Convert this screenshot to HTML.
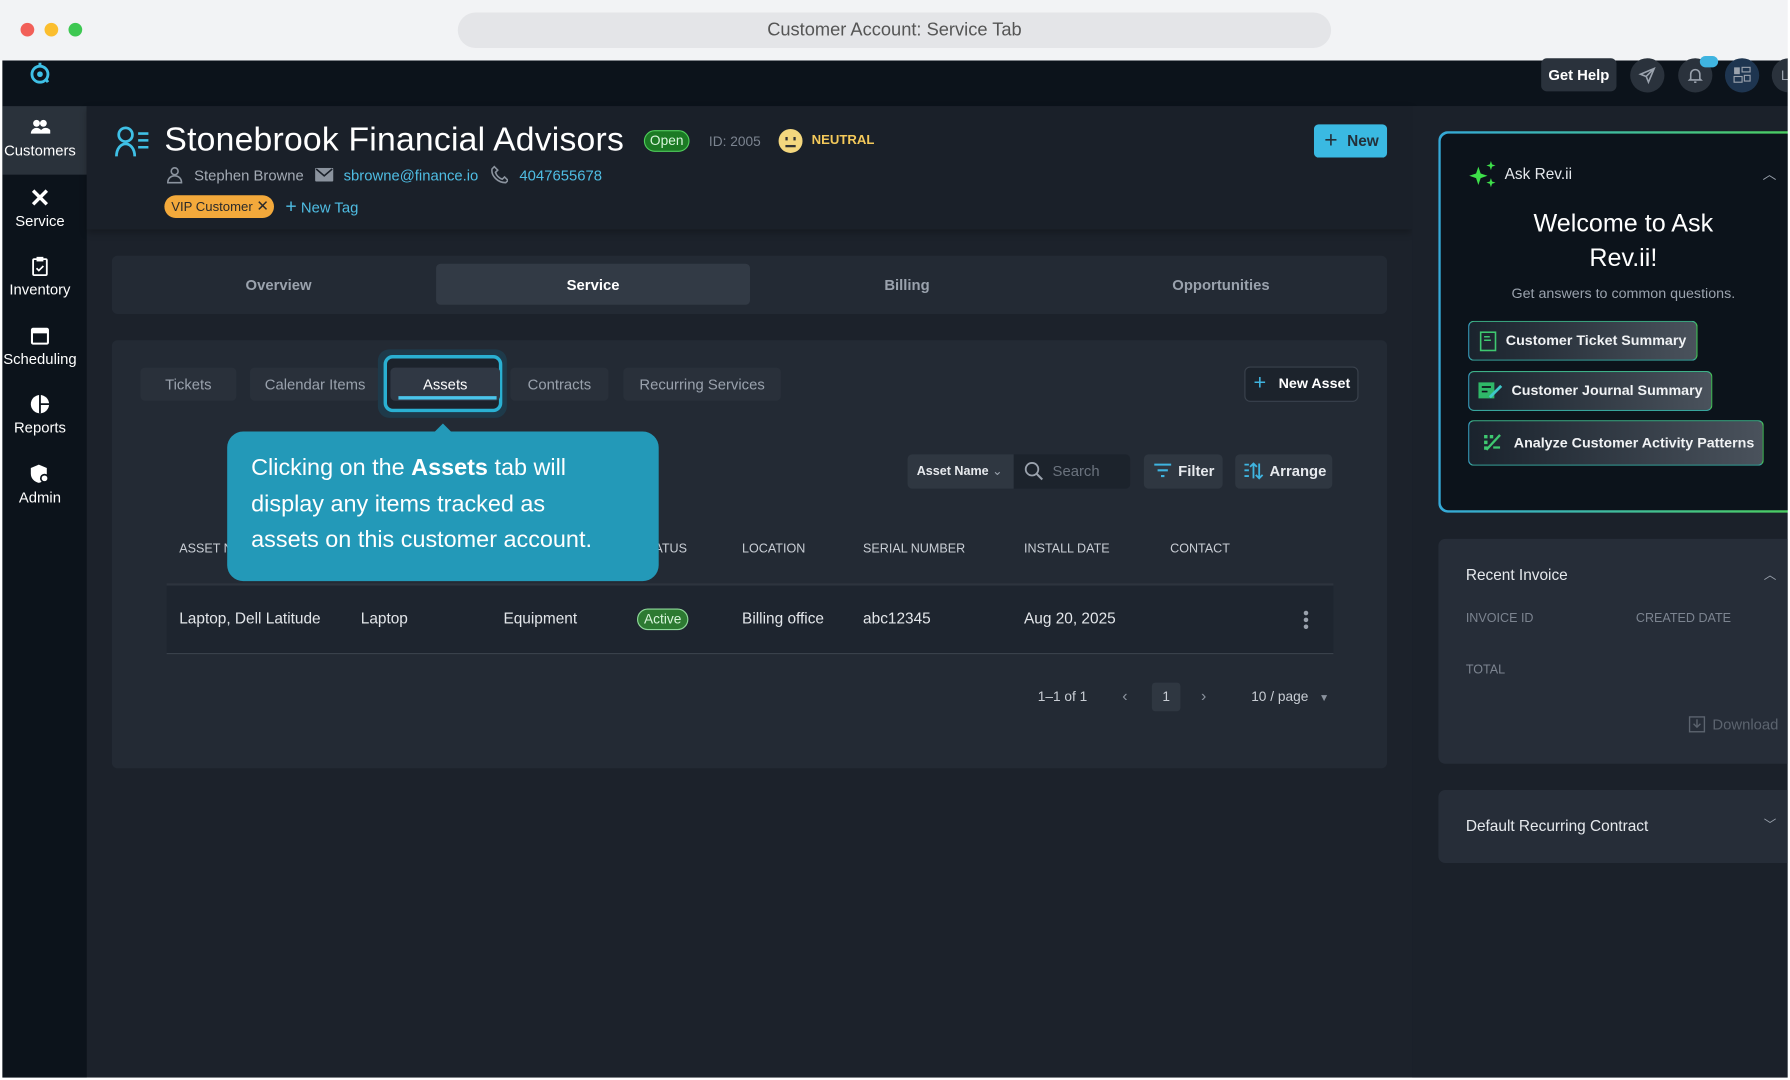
<!DOCTYPE html>
<html><head><meta charset="utf-8">
<style>
*{box-sizing:border-box;margin:0;padding:0}
html,body{width:1790px;height:1080px;overflow:hidden;background:#fff;font-family:"Liberation Sans",sans-serif}
#w{position:absolute;left:0;top:0;width:1568px;height:946px;transform:scale(1.1416);transform-origin:0 0;background:#fff}
.a{position:absolute}
.t{position:absolute;white-space:nowrap}
.side .it{position:absolute;left:-4px;width:74px;text-align:center;color:#fff;font-size:13px}
.side .it svg{display:block;margin:0 auto 4px}
.sub{position:absolute;top:322px;height:29px;background:#29303a;border-radius:4px;color:#9aa2ad;font-size:13px;text-align:center;line-height:29px}
.th{position:absolute;top:475px;color:#c9ced5;font-size:11px}
.td{position:absolute;top:534px;color:#e3e6ea;font-size:13.5px}
.btn{position:absolute;background:#2f3741;border-radius:4px;color:#e6e9ed;font-size:13px;font-weight:bold;line-height:30px;white-space:nowrap}
.ai{position:absolute;left:1286px;height:35px;border-radius:5px;border:1px solid #3aa3c4;background:linear-gradient(90deg,#1a232d,#4a525c);color:#f0f2f4;font-size:12.5px;font-weight:bold;line-height:33px;padding-left:32px;border-right-color:#44c45a;border-top-color:#3fb48a;border-bottom-color:#3aa8a0;white-space:nowrap}
</style></head><body><div id="w">
<div class="a" style="left:0;top:0;width:1568px;height:53px;background:#f2f3f5"></div>
<div class="a" style="left:18px;top:20px;width:12px;height:12px;border-radius:50%;background:#f25f58"></div>
<div class="a" style="left:39px;top:20px;width:12px;height:12px;border-radius:50%;background:#fbbe2e"></div>
<div class="a" style="left:60px;top:20px;width:12px;height:12px;border-radius:50%;background:#3ec852"></div>
<div class="a" style="left:401px;top:11px;width:765px;height:31px;border-radius:16px;background:#e4e5e8;color:#555;font-size:16px;text-align:center;line-height:31px">Customer Account: Service Tab</div>
<div class="a" style="left:2px;top:53px;width:1564px;height:891px;background:#1c222b"></div>
<div class="a" style="left:2px;top:53px;width:1564px;height:40px;background:#0c131b"></div>
<svg class="a" style="left:25px;top:54px" width="20" height="20" viewBox="0 0 20 20"><circle cx="10" cy="11" r="7" fill="none" stroke="#3fc0e6" stroke-width="2.5"/><circle cx="10" cy="11" r="2.5" fill="#3fc0e6"/><path d="M10 1v3M17 18l-2-3" stroke="#3fc0e6" stroke-width="2.5"/></svg>
<div class="a" style="left:1350px;top:51px;width:66px;height:29px;background:#2a323c;border-radius:5px;color:#fff;font-weight:bold;font-size:13px;text-align:center;line-height:29px">Get Help</div>
<div class="a" style="left:1428px;top:51px;width:30px;height:30px;border-radius:50%;background:#2a323c"></div>
<svg class="a" style="left:1435px;top:58px" width="16" height="16" viewBox="0 0 16 16"><path d="M14 2L2 7l5 2 2 5z M7 9l7-7" fill="none" stroke="#9aa2ad" stroke-width="1.4"/></svg>
<div class="a" style="left:1470px;top:51px;width:30px;height:30px;border-radius:50%;background:#2a323c"></div>
<svg class="a" style="left:1477px;top:58px" width="16" height="16" viewBox="0 0 16 16"><path d="M4 11V7a4 4 0 018 0v4l1 1H3z M7 14h2" fill="none" stroke="#9aa2ad" stroke-width="1.4"/></svg>
<div class="a" style="left:1489px;top:49px;width:16px;height:10px;border-radius:6px;background:#3fb4e0"></div>
<div class="a" style="left:1511px;top:51px;width:30px;height:30px;border-radius:50%;background:#1e3550"></div>
<svg class="a" style="left:1518px;top:58px" width="16" height="16" viewBox="0 0 16 16"><rect x="1" y="1" width="5" height="6" fill="#9aa2ad"/><rect x="8" y="1" width="7" height="4" fill="none" stroke="#9aa2ad"/><rect x="1" y="9" width="7" height="5" fill="none" stroke="#9aa2ad"/><rect x="10" y="8" width="5" height="5" fill="none" stroke="#9aa2ad"/></svg>
<div class="a" style="left:1552px;top:51px;width:30px;height:30px;border-radius:50%;background:#2a323c;color:#9aa2ad;font-size:12px;line-height:30px;padding-left:8px">L</div>
<div class="a side" style="left:2px;top:93px;width:74px;height:851px;background:#0c131b">
 <div class="a" style="left:0;top:0;width:74px;height:60px;background:#2a323b"></div>
 <div class="it" style="top:11px"><svg width="18" height="16" viewBox="0 0 18 16"><circle cx="6" cy="4" r="3" fill="#fff"/><circle cx="12" cy="4" r="3" fill="#fff"/><path d="M1 13a5 5 0 0110 0zM9 13a5 5 0 0110 0z" fill="#fff"/></svg>Customers</div>
 <div class="it" style="top:71px"><svg width="18" height="18" viewBox="0 0 18 18"><path d="M3 3l12 12M15 3L3 15" stroke="#fff" stroke-width="3"/></svg>Service</div>
 <div class="it" style="top:131px"><svg width="16" height="18" viewBox="0 0 16 18"><rect x="2" y="3" width="12" height="14" rx="1" fill="none" stroke="#fff" stroke-width="1.6"/><rect x="5" y="1" width="6" height="4" fill="#fff"/><path d="M5 11l2 2 4-4" stroke="#fff" fill="none" stroke-width="1.5"/></svg>Inventory</div>
 <div class="it" style="top:192px"><svg width="18" height="18" viewBox="0 0 18 18"><rect x="2" y="3" width="14" height="13" rx="1" fill="none" stroke="#fff" stroke-width="1.8"/><rect x="2" y="3" width="14" height="4" fill="#fff"/></svg>Scheduling</div>
 <div class="it" style="top:252px"><svg width="18" height="18" viewBox="0 0 18 18"><circle cx="9" cy="9" r="8" fill="#fff"/><path d="M9 1v16M9 9h8" stroke="#0c131b" stroke-width="1.6"/></svg>Reports</div>
 <div class="it" style="top:313px"><svg width="18" height="18" viewBox="0 0 18 18"><path d="M8 1l7 3v5c0 4-3 7-7 8-4-1-7-4-7-8V4z" fill="#fff"/><circle cx="13" cy="13" r="4" fill="#0c131b"/><circle cx="13" cy="13" r="2.5" fill="#fff"/></svg>Admin</div>
</div>
<div class="a" style="left:76px;top:93px;width:1161px;height:108px;background:#1a2029;box-shadow:0 3px 6px rgba(0,0,0,.25)"></div>
<svg class="a" style="left:100px;top:110px" width="32" height="28" viewBox="0 0 32 28"><circle cx="10" cy="8" r="6" fill="none" stroke="#3fc0e6" stroke-width="2.4"/><path d="M2 27c0-7 4-11 8-11s8 4 8 11" fill="none" stroke="#3fc0e6" stroke-width="2.4"/><path d="M21 7h9M21 13h9M21 19h9" stroke="#3fc0e6" stroke-width="2.2"/></svg>
<div class="t" style="left:144px;top:106px;font-size:29.5px;color:#fff;letter-spacing:0.2px">Stonebrook Financial Advisors</div>
<div class="a" style="left:564px;top:114px;width:40px;height:19px;border-radius:10px;border:1.5px solid #4fce5a;background:#1b7a24;color:#d9f5dc;font-size:12px;text-align:center;line-height:16px">Open</div>
<div class="t" style="left:621px;top:117px;font-size:12px;color:#7c8490">ID: 2005</div>
<div class="a" style="left:682px;top:113px;width:21px;height:21px;border-radius:50%;background:#f4d77e"></div>
<div class="a" style="left:688px;top:120px;width:2px;height:3px;background:#333"></div><div class="a" style="left:695px;top:120px;width:2px;height:3px;background:#333"></div><div class="a" style="left:688px;top:127px;width:9px;height:1.5px;background:#333"></div>
<div class="t" style="left:711px;top:117px;font-size:11.5px;color:#f4c95a;font-weight:bold">NEUTRAL</div>
<div class="a" style="left:1151px;top:109px;width:64px;height:29px;border-radius:4px;background:#3ab9e2;color:#23303a;font-weight:bold;font-size:13.5px;line-height:29px;padding-left:29px">New</div>
<div class="t" style="left:1160px;top:112px;font-size:20px;color:#23303a">+</div>
<svg class="a" style="left:146px;top:146px" width="14" height="15" viewBox="0 0 14 15"><circle cx="7" cy="4" r="3" fill="none" stroke="#8b939e" stroke-width="1.4"/><path d="M1 14c0-4 3-6 6-6s6 2 6 6z" fill="none" stroke="#8b939e" stroke-width="1.4"/></svg>
<div class="t" style="left:170px;top:146px;font-size:13px;color:#a3aab4">Stephen Browne</div>
<svg class="a" style="left:276px;top:147px" width="16" height="12" viewBox="0 0 16 12"><rect width="16" height="12" rx="1" fill="#8b939e"/><path d="M1 1l7 6 7-6" fill="none" stroke="#1a2029" stroke-width="1.4"/></svg>
<div class="t" style="left:301px;top:146px;font-size:13px;color:#4fbde3">sbrowne@finance.io</div>
<svg class="a" style="left:430px;top:145px" width="15" height="16" viewBox="0 0 15 16"><path d="M3 1l3 3-2 2c1 3 3 5 6 6l2-2 3 3-2 2C6 15 0 9 1 3z" fill="none" stroke="#8b939e" stroke-width="1.4"/></svg>
<div class="t" style="left:455px;top:146px;font-size:13px;color:#4fbde3">4047655678</div>
<div class="a" style="left:144px;top:171px;width:96px;height:20px;border-radius:10px;background:#f3a93b;color:#2a2a2a;font-size:11.5px;line-height:20px;padding-left:6px;white-space:nowrap">VIP Customer <span style="font-size:13px">✕</span></div>
<div class="t" style="left:250px;top:171px;font-size:13px;color:#4fbde3"><span style="font-size:17px">+</span> New Tag</div>
<div class="a" style="left:98px;top:224px;width:1117px;height:51px;background:#232a34;border-radius:5px"></div>
<div class="a" style="left:382px;top:231px;width:275px;height:36px;background:#323a45;border-radius:4px"></div>
<div class="t" style="left:98px;top:242px;width:292px;text-align:center;font-size:13px;font-weight:bold;color:#9aa2ad">Overview</div>
<div class="t" style="left:382px;top:242px;width:275px;text-align:center;font-size:13px;font-weight:bold;color:#fff">Service</div>
<div class="t" style="left:657px;top:242px;width:275px;text-align:center;font-size:13px;font-weight:bold;color:#9aa2ad">Billing</div>
<div class="t" style="left:932px;top:242px;width:275px;text-align:center;font-size:13px;font-weight:bold;color:#9aa2ad">Opportunities</div>
<div class="a" style="left:98px;top:298px;width:1117px;height:375px;background:#232a34;border-radius:5px"></div>
<div class="sub" style="left:123px;width:84px">Tickets</div>
<div class="sub" style="left:219px;width:114px">Calendar Items</div>
<div class="a" style="left:331px;top:306px;width:113px;height:60px;border-radius:10px;background:#1e3a4a"></div>
<div class="a" style="left:336px;top:311px;width:104px;height:50px;border-radius:8px;border:3px solid #2ab0d2;background:#1c232c"></div>
<div class="sub" style="left:342px;width:96px;background:#303844;color:#fff">Assets</div>
<div class="a" style="left:349px;top:347px;width:86px;height:3px;background:#4ac4ea"></div>
<div class="sub" style="left:447px;width:86px">Contracts</div>
<div class="sub" style="left:546px;width:138px">Recurring Services</div>
<div class="a" style="left:1090px;top:321px;width:100px;height:31px;border:1px solid #3a424d;border-radius:5px;background:#1c232c;color:#fff;font-size:12.5px;font-weight:bold;line-height:29px;padding-left:29px;white-space:nowrap">New Asset</div>
<div class="t" style="left:1098px;top:325px;font-size:19px;color:#3fb4e0">+</div>
<div class="btn" style="left:795px;top:398px;width:93px;padding-left:8px;font-size:11px;border-radius:4px 0 0 4px">Asset Name <span style="color:#9aa2ad;font-weight:normal">⌄</span></div>
<div class="a" style="left:888px;top:398px;width:102px;height:30px;background:#1c232c;border-radius:0 4px 4px 0;color:#6b737e;font-size:13px;line-height:30px;padding-left:34px">Search</div>
<svg class="a" style="left:897px;top:404px" width="17" height="17" viewBox="0 0 17 17"><circle cx="7" cy="7" r="5.5" fill="none" stroke="#9aa2ad" stroke-width="1.6"/><path d="M11 11l5 5" stroke="#9aa2ad" stroke-width="1.8"/></svg>
<div class="btn" style="left:1002px;top:398px;width:69px;padding-left:30px">Filter</div>
<svg class="a" style="left:1011px;top:406px" width="15" height="13" viewBox="0 0 15 13"><path d="M0 1h15M3 6h9M6 11h3" stroke="#3fb4e0" stroke-width="1.8"/></svg>
<div class="btn" style="left:1082px;top:398px;width:85px;padding-left:30px">Arrange</div>
<svg class="a" style="left:1090px;top:405px" width="17" height="15" viewBox="0 0 17 15"><path d="M0 2h4M0 7h4M0 12h4M8 14V1M5 4l3-3 3 3M13 1v13M10 11l3 3 3-3" fill="none" stroke="#3fb4e0" stroke-width="1.6"/></svg>
<div class="th" style="left:157px">ASSET NAME</div>
<div class="th" style="left:560px">STATUS</div>
<div class="th" style="left:650px">LOCATION</div>
<div class="th" style="left:756px">SERIAL NUMBER</div>
<div class="th" style="left:897px">INSTALL DATE</div>
<div class="th" style="left:1025px">CONTACT</div>
<div class="a" style="left:146px;top:511px;width:1022px;height:2px;background:#2d343e"></div>
<div class="a" style="left:146px;top:513px;width:1022px;height:59px;background:#1e252f"></div>
<div class="a" style="left:146px;top:572px;width:1022px;height:1px;background:#39414b"></div>
<div class="td" style="left:157px">Laptop, Dell Latitude</div>
<div class="td" style="left:316px">Laptop</div>
<div class="td" style="left:441px">Equipment</div>
<div class="a" style="left:558px;top:533px;width:45px;height:19px;border-radius:10px;border:1.5px solid #8fd99a;background:#2d7a32;color:#d9f5dc;font-size:12px;text-align:center;line-height:16px">Active</div>
<div class="td" style="left:650px">Billing office</div>
<div class="td" style="left:756px">abc12345</div>
<div class="td" style="left:897px">Aug 20, 2025</div>
<div class="a" style="left:1142px;top:535px;width:4px;height:4px;border-radius:50%;background:#9aa2ad"></div>
<div class="a" style="left:1142px;top:541px;width:4px;height:4px;border-radius:50%;background:#9aa2ad"></div>
<div class="a" style="left:1142px;top:547px;width:4px;height:4px;border-radius:50%;background:#9aa2ad"></div>
<div class="t" style="left:909px;top:603px;font-size:12px;color:#c9ced5">1–1 of 1</div>
<div class="t" style="left:983px;top:601px;font-size:14px;color:#8b939e">‹</div>
<div class="a" style="left:1009px;top:598px;width:25px;height:25px;border-radius:3px;background:#2f3741;color:#c9ced5;font-size:12px;text-align:center;line-height:25px">1</div>
<div class="t" style="left:1052px;top:601px;font-size:14px;color:#8b939e">›</div>
<div class="t" style="left:1096px;top:603px;font-size:12px;color:#c9ced5">10 / page <span style="color:#8b939e;font-size:9px;margin-left:6px">▼</span></div>
<div class="a" style="left:380px;top:371px;width:0;height:0;border-left:8px solid transparent;border-right:8px solid transparent;border-bottom:8px solid #2399b8"></div>
<div class="a" style="left:199px;top:378px;width:378px;height:131px;border-radius:14px;background:#2399b8;color:#fff;font-size:20.5px;line-height:31.5px;padding:16px 0 0 21px;white-space:nowrap">Clicking on the <b>Assets</b> tab will<br>display any items tracked as<br>assets on this customer account.</div>
<div class="a" style="left:1237px;top:93px;width:329px;height:851px;background:#1b212a"></div>
<div class="a" style="left:1260px;top:115px;width:320px;height:334px;border-radius:8px;background:linear-gradient(90deg,#35a9d8,#4ccf5c)"></div>
<div class="a" style="left:1262px;top:117px;width:318px;height:330px;border-radius:7px;background:#0c131b"></div>
<svg class="a" style="left:1286px;top:141px" width="26" height="24" viewBox="0 0 26 24"><path d="M9 5l2 6 6 2-6 2-2 6-2-6-6-2 6-2z" fill="#3ee04a"/><path d="M20 0l1 3 3 1-3 1-1 3-1-3-3-1 3-1zM20 15l1 3 3 1-3 1-1 3-1-3-3-1 3-1z" fill="#3ee04a"/></svg>
<div class="t" style="left:1318px;top:145px;font-size:13.5px;color:#e6e9ed">Ask Rev.ii</div>
<div class="t" style="left:1544px;top:144px;font-size:12px;color:#9aa2ad">︿</div>
<div class="a" style="left:1272px;top:181px;width:300px;text-align:center;font-size:22px;line-height:30px;color:#fff">Welcome to Ask<br>Rev.ii!</div>
<div class="t" style="left:1272px;top:250px;width:300px;text-align:center;font-size:12.5px;color:#9aa2ad">Get answers to common questions.</div>
<div class="ai" style="top:281px;width:201px">Customer Ticket Summary</div>
<svg class="a" style="left:1296px;top:290px" width="15" height="18" viewBox="0 0 15 18"><rect x="1" y="1" width="13" height="16" fill="none" stroke="#3ec870" stroke-width="1.4"/><path d="M4 5h5M4 8h6" stroke="#3ec870" stroke-width="1.3"/></svg>
<div class="ai" style="top:325px;width:214px;padding-left:37px">Customer Journal Summary</div>
<svg class="a" style="left:1295px;top:334px" width="22" height="16" viewBox="0 0 22 16"><path d="M0 1h14v14H0z" fill="#2fb868"/><path d="M3 5h8M3 9h5" stroke="#0c131b" stroke-width="1.5"/><path d="M10 14l10-10" stroke="#3ec8c8" stroke-width="2.5"/></svg>
<div class="ai" style="top:368px;width:259px;height:40px;line-height:38px;padding-left:39px">Analyze Customer Activity Patterns</div>
<svg class="a" style="left:1298px;top:379px" width="18" height="17" viewBox="0 0 18 17"><path d="M2 2h3v3H2zM2 7h3v3H2zM7 2h3v3H7zM2 12h3v3H2z" fill="#3ec870"/><path d="M4 15L16 2" stroke="#3ec870" stroke-width="2"/><path d="M10 13h6" stroke="#3ec870" stroke-width="2"/></svg>
<div class="a" style="left:1260px;top:472px;width:320px;height:197px;border-radius:6px;background:#262d38"></div>
<div class="t" style="left:1284px;top:496px;font-size:13.5px;color:#e6e9ed">Recent Invoice</div>
<div class="t" style="left:1545px;top:495px;font-size:11px;color:#9aa2ad">︿</div>
<div class="t" style="left:1284px;top:536px;font-size:11px;color:#7c8490">INVOICE ID</div>
<div class="t" style="left:1433px;top:536px;font-size:11px;color:#7c8490">CREATED DATE</div>
<div class="t" style="left:1284px;top:581px;font-size:11px;color:#7c8490">TOTAL</div>
<svg class="a" style="left:1479px;top:627px" width="15" height="15" viewBox="0 0 15 15"><rect x="1" y="1" width="13" height="13" fill="none" stroke="#5c646f" stroke-width="1.2"/><path d="M7.5 3v7M4.5 7l3 3 3-3" fill="none" stroke="#5c646f" stroke-width="1.2"/></svg>
<div class="t" style="left:1500px;top:627px;font-size:13px;color:#5c646f">Download</div>
<div class="a" style="left:1260px;top:692px;width:320px;height:64px;border-radius:6px;background:#262d38"></div>
<div class="t" style="left:1284px;top:716px;font-size:13.5px;color:#e6e9ed">Default Recurring Contract</div>
<div class="t" style="left:1545px;top:714px;font-size:11px;color:#9aa2ad">﹀</div>
<div class="a" style="left:0;top:53px;width:2px;height:893px;background:#fff"></div>
<div class="a" style="left:1566px;top:0;width:2px;height:946px;background:#fff"></div>
<div class="a" style="left:0;top:944px;width:1568px;height:2px;background:#fff"></div>
</div></body></html>
